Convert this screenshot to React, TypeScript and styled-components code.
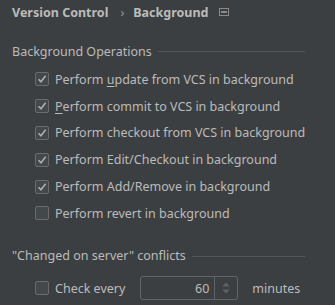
import React from "react";
import styled, { createGlobalStyle } from "styled-components";

const Global = createGlobalStyle`
  html, body {
    margin: 0;
    padding: 0;
    background: #3c3f41;
  }
  body {
    font-family: "Noto Sans", "Open Sans", sans-serif;
    font-size: 12.5px;
    color: #bbbbbb;
  }
`;

const Page = styled.div`
  width: 335px;
  height: 305px;
  background: #3c3f41;
  padding: 0 30px 0 12px;
  box-sizing: border-box;
  overflow: hidden;
`;

const Crumbs = styled.div`
  display: flex;
  align-items: center;
  height: 24px;
  font-weight: 700;
  font-size: 12.5px;
  color: #bbbbbb;
`;

const Chevron = styled.span`
  font-weight: 400;
  margin: 0 9px 0 12px;
  color: #9a9a9a;
`;

const CrumbIcon = styled.svg`
  margin-left: 11px;
  width: 10px;
  height: 8px;
`;

const Section = styled.div<{ $top: number }>`
  margin-top: ${(p) => p.$top}px;
`;

const SectionHead = styled.div`
  display: flex;
  align-items: center;
  height: 20px;
  gap: 6px;
  &::after {
    content: "";
    flex: 1;
    height: 1px;
    background: #535556;
    margin-top: 1px;
  }
`;

const List = styled.div<{ $top: number }>`
  display: flex;
  flex-direction: column;
  padding-left: 23px;
  margin-top: ${(p) => p.$top}px;
`;

const Row = styled.label`
  display: flex;
  align-items: center;
  height: 26.8px;
  gap: 6px;
  white-space: nowrap;
`;

const Box = styled.span`
  width: 12px;
  height: 12px;
  border: 1px solid #6b6b6b;
  border-radius: 2px;
  background: #43494a;
  display: flex;
  align-items: center;
  justify-content: center;
  flex-shrink: 0;
`;

const U = styled.span`
  text-decoration: underline;
  text-underline-offset: 2px;
`;

const Spinner = styled.div`
  display: flex;
  width: 96px;
  height: 22px;
  border: 1px solid #646464;
  border-radius: 3px;
  margin-left: 9px;
  margin-right: 8px;
  box-sizing: content-box;
`;

const SpinValue = styled.div`
  flex: 1;
  display: flex;
  align-items: center;
  justify-content: flex-end;
  padding-right: 5px;
  color: #bbbbbb;
`;

const SpinArrows = styled.div`
  width: 22px;
  border-left: 1px solid #646464;
  display: flex;
  align-items: center;
  justify-content: center;
`;

function Check({ on }: { on: boolean }) {
  return (
    <Box>
      {on && (
        <svg width="10" height="10" viewBox="0 0 10 10">
          <path d="M1.5 5.2 L4 7.8 L8.6 1.8" fill="none" stroke="#b0b0b0" strokeWidth="1.5" />
        </svg>
      )}
    </Box>
  );
}

const ops: { on: boolean; text: React.ReactNode }[] = [
  { on: true, text: <>Perform <U>u</U>pdate from VCS in background</> },
  { on: true, text: <><U>P</U>erform commit to VCS in background</> },
  { on: true, text: <>Perform checkout from VCS in background</> },
  { on: true, text: <>Perform Edit/Checkout in background</> },
  { on: true, text: <>Perform Add/Remove in background</> },
  { on: false, text: <>Perform revert in background</> },
];

export default function App() {
  return (
    <Page>
      <Global />
      <Crumbs>
        Version Control
        <Chevron>›</Chevron>
        Background
        <CrumbIcon viewBox="0 0 10 8">
          <rect x="0.5" y="0.5" width="9" height="7" fill="none" stroke="#8a8a8a" />
          <rect x="2" y="3" width="6" height="2" fill="#8a8a8a" />
        </CrumbIcon>
      </Crumbs>
      <Section $top={17}>
        <SectionHead>Background Operations</SectionHead>
        <List $top={5}>
          {ops.map((o, i) => (
            <Row key={i}>
              <Check on={o.on} />
              <span>{o.text}</span>
            </Row>
          ))}
        </List>
      </Section>
      <Section $top={19}>
        <SectionHead>"Changed on server" conflicts</SectionHead>
        <List $top={9}>
          <Row>
            <Check on={false} />
            <span>Check every</span>
            <Spinner>
              <SpinValue>60</SpinValue>
              <SpinArrows>
                <svg width="10" height="14" viewBox="0 0 10 14">
                  <path d="M1 5.5 L5 1.5 L9 5.5 Z" fill="#5f6162" />
                  <path d="M1 8.5 L5 12.5 L9 8.5 Z" fill="#5f6162" />
                </svg>
              </SpinArrows>
            </Spinner>
            <span>minutes</span>
          </Row>
        </List>
      </Section>
    </Page>
  );
}
